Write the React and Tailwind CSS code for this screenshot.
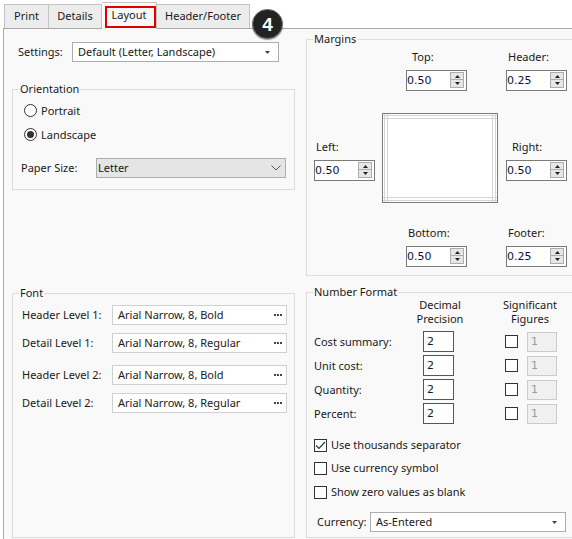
import React from "react"

function Caret() {
  return (
    <svg width="5" height="3" viewBox="0 0 5 3" className="shrink-0">
      <path d="M0 0 H5 L2.5 3 Z" fill="#444" />
    </svg>
  )
}

function Chevron() {
  return (
    <svg width="10" height="6" viewBox="0 0 10 6" className="shrink-0">
      <path d="M0.5 0.5 L5 5 L9.5 0.5" fill="none" stroke="#555" strokeWidth="1" />
    </svg>
  )
}

function Group({ title, className, children }) {
  return (
    <div className={`relative border border-[#dcdcdc] ${className}`}>
      <span className="absolute left-[6px] -top-[9px] px-[1px] bg-[#f9f9f9] leading-[16px]">{title}</span>
      {children}
    </div>
  )
}

function Spinner({ value }) {
  return (
    <div className="flex w-[61px] h-[21px] border border-[#7a7a7a] bg-white">
      <div className="flex-1 flex items-center font-['DejaVu_Sans',sans-serif] text-[11px] text-[#101040]">{value}</div>
      <div className="flex flex-col w-[14px] mt-[1px] mr-[2px]">
        <div className="h-[8px] border border-[#adadad] bg-[#e6e6e6] flex items-center justify-center">
          <svg width="5" height="3" viewBox="0 0 5 3"><path d="M0 3 H5 L2.5 0 Z" fill="#222" /></svg>
        </div>
        <div className="h-[8px] border border-t-0 border-[#adadad] bg-[#e6e6e6] flex items-center justify-center">
          <svg width="5" height="3" viewBox="0 0 5 3"><path d="M0 0 H5 L2.5 3 Z" fill="#222" /></svg>
        </div>
      </div>
    </div>
  )
}

function SpinField({ label, value, labelPad }) {
  return (
    <div className="flex flex-col w-[61px]">
      <div className={`h-[16px] leading-[16px] ${labelPad}`}>{label}</div>
      <div className="mt-[5px]">
        <Spinner value={value} />
      </div>
    </div>
  )
}

function Radio({ checked, label }) {
  return (
    <div className="flex items-center h-[13px] ml-[11px]">
      <div className="w-[13px] h-[13px] rounded-full border border-[#333] bg-white flex items-center justify-center">
        {checked && <div className="w-[7px] h-[7px] rounded-full bg-[#333]" />}
      </div>
      <span className="ml-[4px]">{label}</span>
    </div>
  )
}

function Check({ checked }) {
  return (
    <div className="w-[13px] h-[13px] border border-[#333] bg-white flex items-center justify-center shrink-0">
      {checked && (
        <svg width="11" height="9" viewBox="0 0 11 9">
          <path d="M1 4.5 L4 7.5 L10 1" fill="none" stroke="#333" strokeWidth="1.2" />
        </svg>
      )}
    </div>
  )
}

function FontRow({ label, value, className }) {
  return (
    <div className={`flex items-center h-[20px] ${className}`}>
      <span className="ml-[9px] w-[90px]">{label}</span>
      <div className="w-[175px] h-[20px] border border-[#d0d0d0] bg-white flex items-center pl-[5px] pr-[4px]">
        <span className="flex-1">{value}</span>
        <svg width="8" height="2" viewBox="0 0 8 2">
          <rect x="0" y="0" width="2" height="2" fill="#444" />
          <rect x="3" y="0" width="2" height="2" fill="#444" />
          <rect x="6" y="0" width="2" height="2" fill="#444" />
        </svg>
      </div>
    </div>
  )
}

function NumRow({ label, className }) {
  return (
    <div className={`flex items-center h-[21px] ${className}`}>
      <span className="pl-[7px] w-[116px]">{label}</span>
      <div className="w-[31px] h-[21px] border border-[#555] bg-white flex items-center pl-[3px] font-['DejaVu_Sans',sans-serif] text-[11px]">2</div>
      <div className="ml-[51px]">
        <Check />
      </div>
      <div className="ml-[9px] w-[30px] h-[20px] border border-[#cccccc] bg-[#f0f0f0] flex items-center pl-[3px] text-[#9a9a9a] font-['DejaVu_Sans',sans-serif] text-[11px]">1</div>
    </div>
  )
}

function CheckRow({ checked, label, className }) {
  return (
    <div className={`flex items-center h-[16px] pl-[7px] ${className}`}>
      <Check checked={checked} />
      <span className="ml-[4px]">{label}</span>
    </div>
  )
}

export default function App() {
  return (
    <div className="relative w-[572px] h-[539px] overflow-hidden bg-white flex flex-col font-['Noto_Sans',sans-serif] text-[11px] leading-[16px] text-[#1a1a1a]">
      {/* Tabs */}
      <div className="flex items-end h-[28px] pl-[4px] shrink-0 relative z-10">
        <div className="w-[45px] h-[24px] border border-b-0 border-[#c4c4c4] bg-[#ececec] flex items-center justify-center pb-[1px]">Print</div>
        <div className="w-[53px] h-[24px] border border-b-0 border-l-0 border-[#c4c4c4] bg-[#ececec] flex items-center justify-center pb-[1px]">Details</div>
        <div className="relative w-[55px] h-[27px] -mb-px border border-b-0 border-l-0 border-[#c4c4c4] bg-[#f9f9f9] flex items-center justify-center pb-[2px]">
          Layout
          <div className="absolute left-[3px] top-[3px] w-[51px] h-[22px] border-2 border-[#e00000]" />
        </div>
        <div className="w-[93px] h-[24px] border border-b-0 border-l-0 border-[#c4c4c4] bg-[#ececec] flex items-center justify-center pb-[1px]">Header/Footer</div>
      </div>

      {/* Step badge */}
      <div className="absolute left-[252px] top-[9px] z-20 w-[31px] h-[30px] rounded-full bg-[#232323] border-[1.5px] border-[#777] shadow-[0_1px_1px_rgba(0,0,0,0.4)] flex items-center justify-center text-white font-['Liberation_Sans',sans-serif] font-bold text-[19px] leading-none">
        4
      </div>

      {/* Panel */}
      <div className="flex flex-1 ml-[3px] border-l border-t border-[#a9a9a9] bg-[#f9f9f9]">
        {/* Left column */}
        <div className="w-[297px] shrink-0 pl-[8px] flex flex-col">
          <div className="mt-[13px] flex items-center h-[20px]">
            <span className="ml-[6px] w-[54px]">Settings:</span>
            <div className="w-[207px] h-[20px] border border-[#adadad] bg-white flex items-center pl-[5px] pr-[8px]">
              <span className="flex-1">Default (Letter, Landscape)</span>
              <Caret />
            </div>
          </div>

          <Group title="Orientation" className="mt-[27px] w-[283px] h-[101px]">
            <div className="pt-[14px]">
              <Radio label="Portrait" />
            </div>
            <div className="mt-[11px]">
              <Radio checked label="Landscape" />
            </div>
            <div className="mt-[17px] flex items-center h-[20px]">
              <span className="ml-[8px] w-[75px]">Paper Size:</span>
              <div className="w-[190px] h-[20px] border border-[#adadad] bg-[#e5e5e5] flex items-center pl-[1px] pr-[4px]">
                <span className="flex-1">Letter</span>
                <Chevron />
              </div>
            </div>
          </Group>

          <Group title="Font" className="mt-[103px] w-[283px] h-[245px]">
            <FontRow className="mt-[11px]" label="Header Level 1:" value="Arial Narrow, 8, Bold" />
            <FontRow className="mt-[8px]" label="Detail Level 1:" value="Arial Narrow, 8, Regular" />
            <FontRow className="mt-[12px]" label="Header Level 2:" value="Arial Narrow, 8, Bold" />
            <FontRow className="mt-[8px]" label="Detail Level 2:" value="Arial Narrow, 8, Regular" />
          </Group>
        </div>

        {/* Right column */}
        <div className="w-[276px] shrink-0 ml-[5px] flex flex-col">
          <Group title="Margins" className="mt-[10px] h-[237px]">
            <div className="flex pt-[9px] ml-[99px]">
              <SpinField label="Top:" value="0.50" labelPad="pl-[6px]" />
              <div className="ml-[39px]">
                <SpinField label="Header:" value="0.25" labelPad="pl-[2px]" />
              </div>
            </div>
            <div className="flex items-start mt-[22px] ml-[7px]">
              <div className="pt-[26px]">
                <SpinField label="Left:" value="0.50" labelPad="pl-[2px]" />
              </div>
              <div className="ml-[7px] w-[116px] h-[90px] border border-[#7a7a7a] bg-white">
                <svg width="114" height="88" viewBox="0 0 114 88" className="block">
                  <g stroke="#d4d4d4" strokeWidth="1">
                    <line x1="0" y1="1.5" x2="114" y2="1.5" />
                    <line x1="0" y1="4.5" x2="114" y2="4.5" />
                    <line x1="0" y1="83.5" x2="114" y2="83.5" />
                    <line x1="0" y1="86.5" x2="114" y2="86.5" />
                    <line x1="1.5" y1="0" x2="1.5" y2="88" />
                    <line x1="4.5" y1="0" x2="4.5" y2="88" />
                    <line x1="109.5" y1="0" x2="109.5" y2="88" />
                    <line x1="112.5" y1="0" x2="112.5" y2="88" />
                  </g>
                </svg>
              </div>
              <div className="ml-[8px] pt-[26px]">
                <SpinField label="Right:" value="0.50" labelPad="pl-[6px]" />
              </div>
            </div>
            <div className="flex mt-[22px] ml-[99px]">
              <SpinField label="Bottom:" value="0.50" labelPad="pl-[2px]" />
              <div className="ml-[39px]">
                <SpinField label="Footer:" value="0.25" labelPad="pl-[2px]" />
              </div>
            </div>
          </Group>

          <Group title="Number Format" className="mt-[16px] h-[246px]">
            <div className="flex pt-[5px] ml-[103px] leading-[14px]">
              <div className="w-[60px] text-center">Decimal<br />Precision</div>
              <div className="ml-[30px] w-[60px] text-center">Significant<br />Figures</div>
            </div>
            <NumRow className="mt-[5px]" label="Cost summary:" />
            <NumRow className="mt-[3px]" label="Unit cost:" />
            <NumRow className="mt-[3px]" label="Quantity:" />
            <NumRow className="mt-[3px]" label="Percent:" />

            <CheckRow className="mt-[13px]" checked label="Use thousands separator" />
            <CheckRow className="mt-[7px]" label="Use currency symbol" />
            <CheckRow className="mt-[8px]" label="Show zero values as blank" />

            <div className="mt-[12px] flex items-center h-[20px]">
              <span className="pl-[10px] w-[63px]">Currency:</span>
              <div className="w-[196px] h-[20px] border border-[#adadad] bg-white flex items-center pl-[5px] pr-[8px]">
                <span className="flex-1">As-Entered</span>
                <Caret />
              </div>
            </div>
          </Group>
        </div>
      </div>
    </div>
  )
}
